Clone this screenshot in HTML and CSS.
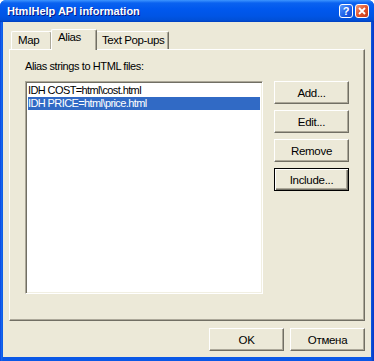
FILE: index.html
```html
<!DOCTYPE html>
<html lang="en">
  <head>
    <meta charset="UTF-8" />
    <title>HtmlHelp API information</title>
    <link rel="stylesheet" href="styles.css">
  </head>
  <body>
    <div class="window">
      <div class="titlebar">
        <span class="title">HtmlHelp API information</span>
        <span class="tbtn help">?</span>
        <span class="tbtn close">
          <svg width="8" height="8" viewBox="0 0 8 8">
            <path d="M1 1 L7 7 M7 1 L1 7" stroke="#fff" stroke-width="1.8" />
          </svg>
        </span>
      </div>
      <div class="client">
        <div class="tabs">
          <div class="tab tab-map">Map</div>
          <div class="tab tab-alias active">Alias</div>
          <div class="tab tab-popups">Text Pop-ups</div>
        </div>
        <div class="page">
          <div class="label">Alias strings to HTML files:</div>
          <div class="page-body">
            <div class="list">
              <div class="item">IDH COST=html\cost.html</div>
              <div class="item selected">IDH PRICE=html\price.html</div>
            </div>
            <div class="side">
              <button class="btn">Add...</button>
              <button class="btn">Edit...</button>
              <button class="btn">Remove</button>
              <button class="btn default">Include...</button>
            </div>
          </div>
        </div>
        <div class="footer">
          <button class="btn">OK</button>
          <button class="btn">Отмена</button>
        </div>
      </div>
    </div>
  </body>
</html>
```

FILE: styles.css
```css
* {
  box-sizing: border-box;
}
body {
  margin: 0;
  background-color: #ffffff;
  font-family: "Liberation Sans", Arial, sans-serif;
  font-size: 11px;
  letter-spacing: -0.4px;
}
.window {
  width: 374px;
  height: 361px;
  display: flex;
  flex-direction: column;
  background: linear-gradient(to right, #0831d9 0, #166aee 1px, #0a58e6 3px, #0a58e6 371px, #0841c4 373px, #0831d9 374px);
  border-radius: 6px 6px 0 0;
}
.titlebar {
  height: 22px;
  display: flex;
  align-items: center;
  padding: 0 5px 0 7px;
  background: linear-gradient(#3d95ff 0, #0a62f0 3px, #0058ee 9px, #0055e5 16px, #0050d8 20px, #003fbf 22px);
  border-radius: 6px 6px 0 0;
}
.title {
  flex: 1;
  color: #ffffff;
  font-weight: bold;
  font-size: 11px;
  letter-spacing: 0;
  text-shadow: 1px 1px #0a1883;
}
.tbtn {
  width: 14px;
  height: 14px;
  border: 1px solid #ffffff;
  border-radius: 3px;
  display: flex;
  align-items: center;
  justify-content: center;
  color: #ffffff;
  font-weight: bold;
  font-size: 11px;
  letter-spacing: 0;
}
.help {
  background: linear-gradient(135deg, #5a9bff, #1a5ee8 60%, #1248c8);
  margin-right: 2px;
}
.close {
  background: linear-gradient(135deg, #f09a7a, #e2552c 50%, #c2391a);
}
.client {
  flex: 1;
  margin: 0 3px 4px 3px;
  background-color: #ece9d8;
  padding: 7px 6px 6px 6px;
  display: flex;
  flex-direction: column;
}
.tabs {
  height: 20px;
  display: flex;
  align-items: flex-end;
  padding-left: 2px;
}
.tab {
  height: 18px;
  padding: 2px 0 0 6px;
  border-top: 1px solid #ffffff;
  border-left: 1px solid #ffffff;
  border-right: 1px solid #716f64;
  box-shadow: inset -1px 0 #aca899;
  border-radius: 2px 2px 0 0;
  background-color: #ece9d8;
  color: #000000;
  font-size: 11.5px;
}
.tab-map {
  width: 41px;
}
.tab-alias {
  width: 46px;
  margin: 0 -1px 0 -1px;
}
.tab-popups {
  width: 73px;
  padding-left: 5px;
}
.tab.active {
  height: 21px;
  margin-bottom: -1px;
  padding-top: 1px;
  position: relative;
  z-index: 2;
}
.page {
  height: 272px;
  border-top: 1px solid #ffffff;
  border-left: 1px solid #ffffff;
  border-right: 1px solid #716f64;
  border-bottom: 1px solid #716f64;
  box-shadow: inset -1px -1px #aca899;
  padding: 10px 14px 0 14px;
}
.label {
  height: 13px;
  line-height: 13px;
  margin-bottom: 8px;
  padding-left: 1px;
}
.page-body {
  display: flex;
  gap: 11px;
}
.list {
  width: 238px;
  height: 213px;
  margin-left: 1px;
  background-color: #ffffff;
  border-top: 1px solid #aca899;
  border-left: 1px solid #aca899;
  border-right: 1px solid #ffffff;
  border-bottom: 1px solid #ffffff;
  box-shadow: inset 1px 1px #716f64, inset -1px -1px #f1efe2;
  padding: 2px 2px;
}
.item {
  height: 13px;
  line-height: 13px;
  padding-left: 0;
  color: #000000;
  letter-spacing: -0.6px;
}
.item.selected {
  background-color: #316ac5;
  color: #ffffff;
}
.side {
  display: flex;
  flex-direction: column;
  gap: 6px;
}
.btn {
  width: 75px;
  height: 23px;
  padding: 0;
  margin: 0;
  font-family: inherit;
  font-size: 11.5px;
  letter-spacing: -0.3px;
  color: #000000;
  background-color: #ece9d8;
  border-top: 1px solid #ffffff;
  border-left: 1px solid #ffffff;
  border-right: 1px solid #716f64;
  border-bottom: 1px solid #716f64;
  box-shadow: inset -1px -1px #aca899;
  border-radius: 0;
}
.btn.default {
  border: 1px solid #000000;
  box-shadow: inset 1px 1px #ffffff, inset -1px -1px #716f64, inset -2px -2px #aca899;
}
.footer {
  margin-top: 7px;
  display: flex;
  justify-content: flex-end;
  gap: 6px;
}
```
